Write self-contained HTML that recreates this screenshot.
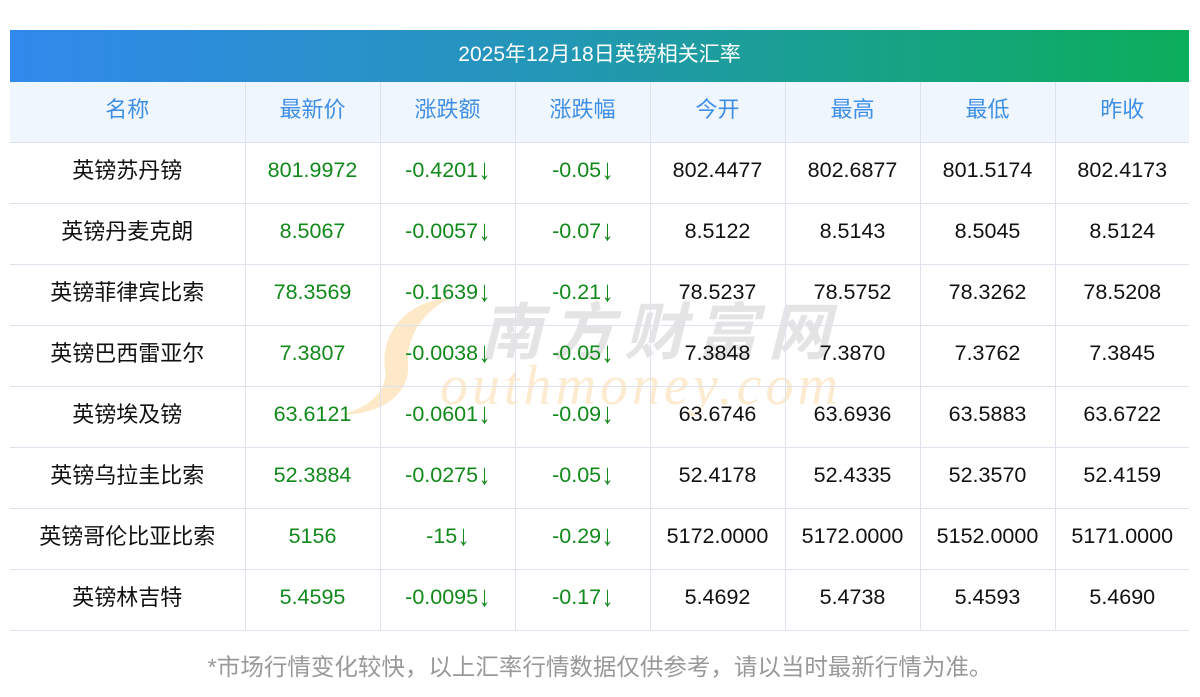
<!DOCTYPE html><html><head><meta charset="utf-8"><style>
body{margin:0;background:#fff;width:1200px;height:697px;overflow:hidden;position:relative;font-family:"Liberation Sans","Noto Sans CJK SC",sans-serif}
.title{position:absolute;left:10px;top:30px;width:1179px;height:52px;background:linear-gradient(90deg,#3189ec,#2496b8 45%,#0bae5a);color:#fff;font-size:21px;line-height:50px;text-align:center}
table{position:absolute;left:10px;top:82px;width:1179px;border-collapse:collapse;table-layout:fixed}
td{height:56px;border:1px solid #dde2ec;text-align:center;font-size:21.5px;color:#111;padding:0 0 4px 0;line-height:1}
td:first-child{font-size:22px}
tr td:first-child{border-left:none}tr td:last-child{border-right:none}
tr:first-child td{border-top:none;background:#f0f6fe;color:#3f8fe6;font-size:22px}
.g{color:#11891b}
i{font-style:normal;display:inline-block;transform:scale(1.1,1.35);margin-left:1px}
.note{position:absolute;top:648px;width:1200px;text-align:center;color:#999;font-size:23.5px}
.wm{position:absolute;pointer-events:none;line-height:1}
</style></head><body>
<div class="title">2025年12月18日英镑相关汇率</div>
<svg class="wm" style="left:340px;top:290px" width="140" height="130"><path d="M110 8 C70 10 40 40 45 80 C48 100 30 118 0 125 C40 125 70 105 68 75 C66 45 85 20 110 8Z" fill="#fde9c8"/></svg>
<div class="wm" style="left:480px;top:296px;font-size:62px;color:#e4e4e4;font-style:italic;letter-spacing:10px;font-family:'Noto Sans CJK SC',sans-serif;font-weight:bold">南方财富网</div>
<div class="wm" style="left:440px;top:358px;font-size:56px;color:#fdebd0;font-style:italic;font-family:'Liberation Serif',serif;letter-spacing:4px">outhmoney.com</div>
<table>
<colgroup><col style="width:235px"><col style="width:135px"><col style="width:135px"><col style="width:135px"><col style="width:135px"><col style="width:135px"><col style="width:135px"><col style="width:134px"></colgroup>
<tr><td>名称</td><td>最新价</td><td>涨跌额</td><td>涨跌幅</td><td>今开</td><td>最高</td><td>最低</td><td>昨收</td></tr>
<tr><td>英镑苏丹镑</td><td class="g">801.9972</td><td class="g">-0.4201<i>↓</i></td><td class="g">-0.05<i>↓</i></td><td>802.4477</td><td>802.6877</td><td>801.5174</td><td>802.4173</td></tr>
<tr><td>英镑丹麦克朗</td><td class="g">8.5067</td><td class="g">-0.0057<i>↓</i></td><td class="g">-0.07<i>↓</i></td><td>8.5122</td><td>8.5143</td><td>8.5045</td><td>8.5124</td></tr>
<tr><td>英镑菲律宾比索</td><td class="g">78.3569</td><td class="g">-0.1639<i>↓</i></td><td class="g">-0.21<i>↓</i></td><td>78.5237</td><td>78.5752</td><td>78.3262</td><td>78.5208</td></tr>
<tr><td>英镑巴西雷亚尔</td><td class="g">7.3807</td><td class="g">-0.0038<i>↓</i></td><td class="g">-0.05<i>↓</i></td><td>7.3848</td><td>7.3870</td><td>7.3762</td><td>7.3845</td></tr>
<tr><td>英镑埃及镑</td><td class="g">63.6121</td><td class="g">-0.0601<i>↓</i></td><td class="g">-0.09<i>↓</i></td><td>63.6746</td><td>63.6936</td><td>63.5883</td><td>63.6722</td></tr>
<tr><td>英镑乌拉圭比索</td><td class="g">52.3884</td><td class="g">-0.0275<i>↓</i></td><td class="g">-0.05<i>↓</i></td><td>52.4178</td><td>52.4335</td><td>52.3570</td><td>52.4159</td></tr>
<tr><td>英镑哥伦比亚比索</td><td class="g">5156</td><td class="g">-15<i>↓</i></td><td class="g">-0.29<i>↓</i></td><td>5172.0000</td><td>5172.0000</td><td>5152.0000</td><td>5171.0000</td></tr>
<tr><td>英镑林吉特</td><td class="g">5.4595</td><td class="g">-0.0095<i>↓</i></td><td class="g">-0.17<i>↓</i></td><td>5.4692</td><td>5.4738</td><td>5.4593</td><td>5.4690</td></tr>
</table>
<div class="note">*市场行情变化较快，以上汇率行情数据仅供参考，请以当时最新行情为准。</div>
</body></html>
